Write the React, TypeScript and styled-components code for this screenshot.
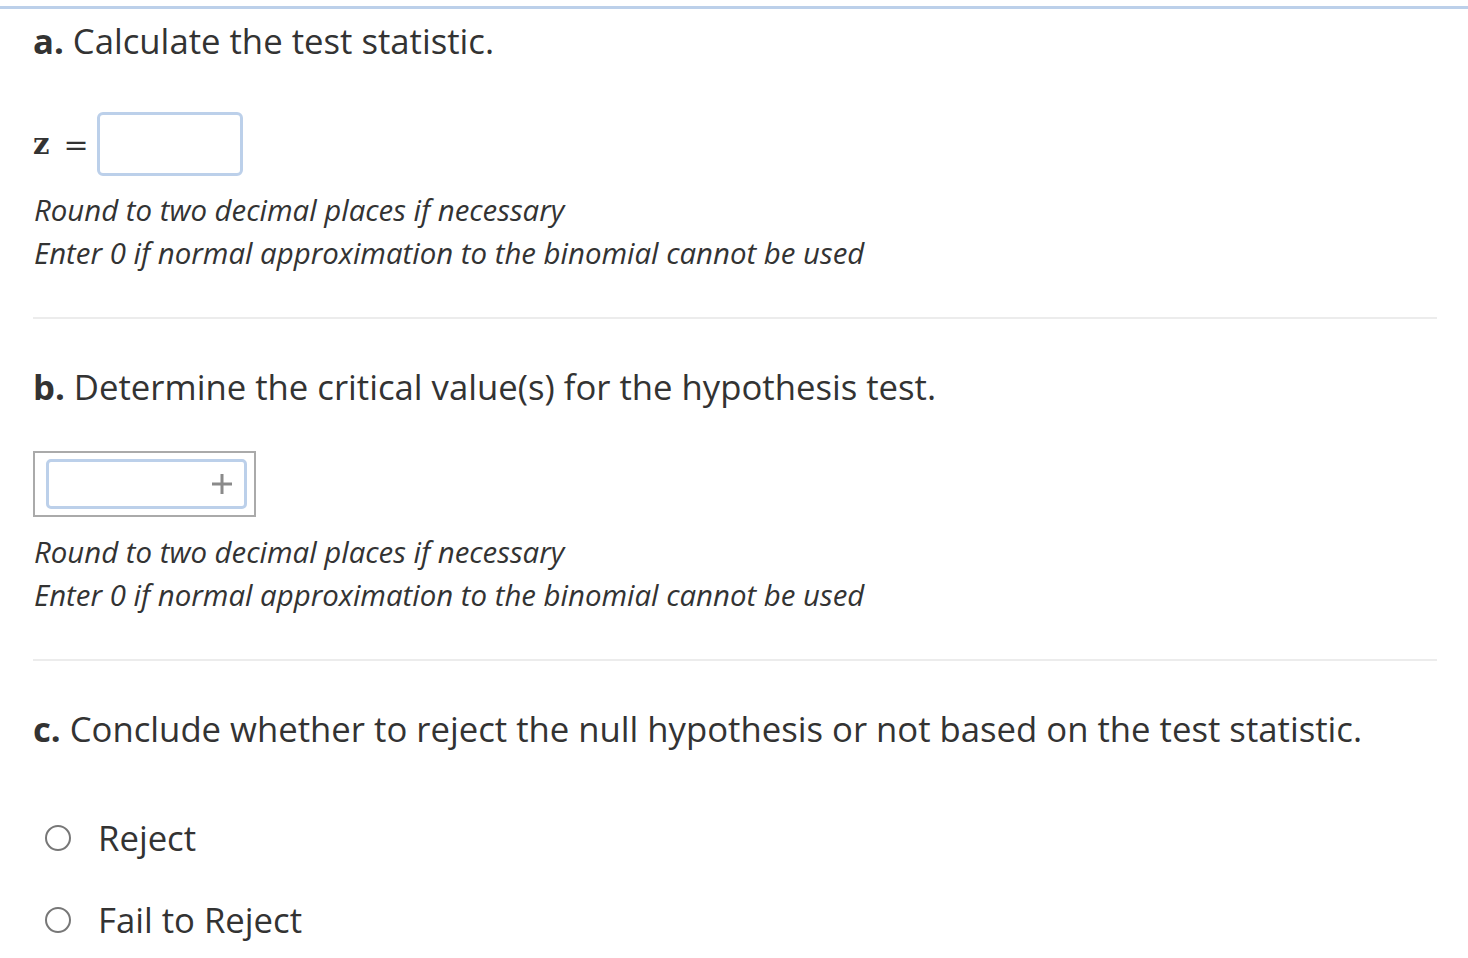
import React from 'react';
import styled, { createGlobalStyle } from 'styled-components';

const GlobalStyle = createGlobalStyle`
  html, body {
    margin: 0;
    padding: 0;
    background: #ffffff;
  }
  body {
    font-family: 'Open Sans', 'Noto Sans', sans-serif;
    color: #333333;
  }
`;

const Page = styled.div`
  margin-top: 6px;
  border-top: 3px solid #bcd0ea;
  padding: 0 31px 0 33px;
`;

const Section = styled.section<{ $first?: boolean; $last?: boolean }>`
  padding-top: ${({ $first }) => ($first ? '9px' : '45px')};
  border-bottom: ${({ $last }) => ($last ? 'none' : '2px solid #ececec')};
  padding-bottom: ${({ $last }) => ($last ? '0' : '42px')};
`;

const Heading = styled.h2`
  margin: 0;
  font-size: 34.7px;
  font-weight: 400;
  line-height: 46px;
  color: #333333;

  b {
    font-weight: 700;
  }
`;

const EquationRow = styled.div`
  display: flex;
  align-items: center;
  margin-top: 48px;
`;

const MathVar = styled.span`
  font-family: 'DejaVu Serif', 'Liberation Serif', serif;
  font-weight: 700;
  font-size: 29px;
  color: #333333;
  margin-right: 14px;
`;

const Equals = styled.span`
  font-family: 'DejaVu Serif', 'Liberation Serif', serif;
  font-size: 30px;
  color: #333333;
  margin-right: 8px;
`;

const AnswerInput = styled.input`
  box-sizing: border-box;
  width: 146px;
  height: 64px;
  border: 3px solid #bcd0ea;
  border-radius: 6px;
  outline: none;
  background: #ffffff;
`;

const Hint = styled.p`
  margin: 0;
  font-style: italic;
  font-size: 29.4px;
  line-height: 43px;
  color: #333333;
`;

const Hints = styled.div<{ $top: number }>`
  margin-top: ${({ $top }) => $top}px;
  padding-left: 1px;
`;

const ListFrame = styled.div`
  margin-top: 41px;
  box-sizing: border-box;
  width: 223px;
  height: 66px;
  border: 2px solid #aaaaaa;
  padding: 6px 7px 6px 11px;
`;

const ListInput = styled.div`
  box-sizing: border-box;
  height: 50px;
  border: 3px solid #bcd0ea;
  border-radius: 5px;
  display: flex;
  align-items: center;
  justify-content: flex-end;
  padding-right: 12px;
`;

const PlusIcon = styled.svg`
  width: 20px;
  height: 20px;
  display: block;
`;

const Options = styled.div`
  margin-top: 63px;
  display: flex;
  flex-direction: column;
  gap: 36px;
  padding-left: 12px;
`;

const Option = styled.label`
  display: flex;
  align-items: center;
  gap: 27px;
  font-size: 34.7px;
  line-height: 46px;
  color: #333333;
  cursor: pointer;
`;

const Radio = styled.span`
  box-sizing: border-box;
  width: 26px;
  height: 26px;
  border: 2px solid #777777;
  border-radius: 50%;
  flex-shrink: 0;
`;

const hints = [
  'Round to two decimal places if necessary',
  'Enter 0 if normal approximation to the binomial cannot be used',
];

function App() {
  return (
    <>
      <GlobalStyle />
      <Page>
        <Section $first>
          <Heading>
            <b>a.</b> Calculate the test statistic.
          </Heading>
          <EquationRow>
            <MathVar>z</MathVar>
            <Equals>=</Equals>
            <AnswerInput aria-label="z" />
          </EquationRow>
          <Hints $top={13}>
            {hints.map((h) => (
              <Hint key={h}>{h}</Hint>
            ))}
          </Hints>
        </Section>
        <Section>
          <Heading>
            <b>b.</b> Determine the critical value(s) for the hypothesis test.
          </Heading>
          <ListFrame>
            <ListInput>
              <PlusIcon viewBox="0 0 20 20">
                <path d="M10 0v20M0 10h20" stroke="#8a8a8a" strokeWidth="3" fill="none" />
              </PlusIcon>
            </ListInput>
          </ListFrame>
          <Hints $top={14}>
            {hints.map((h) => (
              <Hint key={h}>{h}</Hint>
            ))}
          </Hints>
        </Section>
        <Section $last>
          <Heading>
            <b>c.</b> Conclude whether to reject the null hypothesis or not based on the test statistic.
          </Heading>
          <Options>
            <Option>
              <Radio />
              Reject
            </Option>
            <Option>
              <Radio />
              Fail to Reject
            </Option>
          </Options>
        </Section>
      </Page>
    </>
  );
}

export default App;
